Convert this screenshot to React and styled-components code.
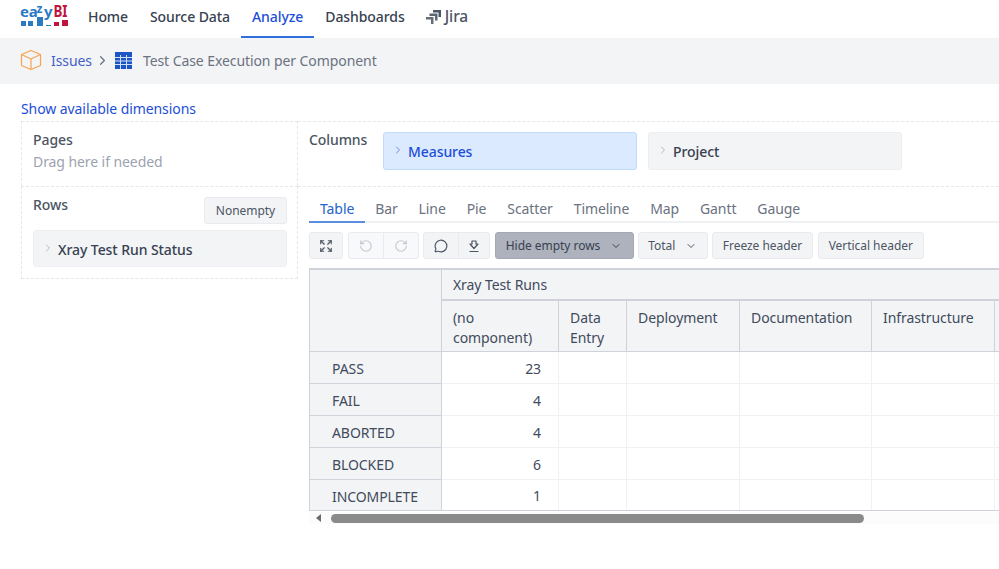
import React from 'react';
import styled, { createGlobalStyle } from 'styled-components';
import { ChevronRight, ChevronDown, Expand, RotateCcw, RotateCw, MessageCircle } from 'lucide-react';

const GlobalStyle = createGlobalStyle`
  html, body {
    margin: 0;
    padding: 0;
    background: #fff;
    overflow: hidden;
  }
  body {
    font-family: "Noto Sans", "Open Sans", sans-serif;
    font-size: 14px;
    letter-spacing: -0.08px;
    color: #374151;
  }
  * { box-sizing: border-box; }
`;

const Page = styled.div`
  width: 999px;
  height: 569px;
  overflow: hidden;
`;

const Nav = styled.nav`
  height: 38px;
  display: flex;
  align-items: stretch;
  padding-left: 20px;
`;

const Logo = styled.svg`
  width: 50px;
  height: 30px;
  margin-right: 7px;
`;

const NavItem = styled.a`
  display: flex;
  align-items: center;
  padding: 0 11px 4px;
  height: 38px;
  font-size: 14px;
  font-weight: 500;
  color: ${p => (p.$active ? '#1d4ed8' : '#374151')};
  border-bottom: 2px solid ${p => (p.$active ? '#2f6fdf' : 'transparent')};
`;

const JiraItem = styled(NavItem)`
  gap: 3px;
  padding-left: 10px;
  font-size: 15.5px;
  color: #4b5563;
`;

const Crumbs = styled.div`
  height: 46px;
  background: #f3f4f6;
  display: flex;
  align-items: center;
  padding: 0 0 2px 20px;
  font-size: 14px;
`;

const CrumbLink = styled.a`
  color: #4460c8;
  margin-left: 9px;
`;

const CrumbChevron = styled(ChevronRight)`
  color: #6b7280;
  margin: 0 5px 0 3px;
`;

const CrumbTitle = styled.span`
  color: #6b7280;
  margin-left: 11px;
`;

const ShowLink = styled.a`
  display: block;
  margin: 15px 0 0 21px;
  height: 22px;
  line-height: 19px;
  font-size: 14px;
  color: #1d4ed8;
`;

const Board = styled.div`
  display: grid;
  grid-template-columns: 277px 701px;
  grid-template-rows: 65px auto;
  margin-left: 21px;
`;

const Zone = styled.section`
  border-top: 1px dashed #e5e7eb;
  border-left: ${p => (p.$right ? 'none' : '1px dashed #e5e7eb')};
  border-right: ${p => (p.$right ? 'none' : '1px dashed #e5e7eb')};
  border-bottom: ${p => (p.$bottom ? '1px dashed #e5e7eb' : 'none')};
`;

const PagesZone = styled(Zone)`
  padding: 8px 11px;
`;

const ZoneTitle = styled.div`
  font-size: 14px;
  font-weight: 500;
  line-height: 20px;
  color: #4b5563;
`;

const Hint = styled.div`
  font-size: 14px;
  line-height: 22px;
  margin-top: 1px;
  color: #9ca3af;
`;

const ColumnsZone = styled(Zone)`
  display: flex;
  padding: 8px 0 0 11px;
`;

const ColumnsTitle = styled(ZoneTitle)`
  width: 74px;
  flex: none;
`;

const Pills = styled.div`
  display: flex;
  gap: 11px;
  margin-top: 2px;
`;

const Pill = styled.div`
  width: 254px;
  height: ${p => p.$height || 38}px;
  display: flex;
  align-items: center;
  padding-left: 8px;
  gap: 4px;
  border-radius: 3px;
  border: 1px solid ${p => (p.$active ? '#bfdbfe' : '#eceef1')};
  background: ${p => (p.$active ? '#dbeafe' : '#f3f4f6')};
  color: ${p => (p.$active ? '#1d4ed8' : '#374151')};
  font-weight: 500;
  font-size: 14px;
  svg { color: ${p => (p.$active ? '#6a8fe0' : '#b3b8c2')}; flex: none; margin-top: -3px; }
`;

const RowPill = styled(Pill)`
  padding-top: 1px;
`;

const RowsZone = styled(Zone)`
  padding: 8px 10px 11px 11px;
  height: 93px;
`;

const RowsHead = styled.div`
  display: flex;
  justify-content: space-between;
  height: 35px;
`;

const Button = styled.button`
  height: 27px;
  width: ${p => p.$width}px;
  padding: 0;
  flex: none;
  display: inline-flex;
  align-items: center;
  justify-content: center;
  gap: 10px;
  font: inherit;
  font-size: 12px;
  letter-spacing: -0.04px;
  color: ${p => (p.$pressed ? '#374151' : '#4b5563')};
  background: ${p => (p.$pressed ? '#adb2bd' : '#f3f4f6')};
  border: 1px solid ${p => (p.$pressed ? '#a3a8b4' : '#e9ebee')};
  border-radius: 3px;
`;

const NonemptyButton = styled(Button)`
  margin-top: 2px;
`;

const ReportZone = styled(Zone)`
  padding-left: 11px;
`;

const Tabs = styled.div`
  display: flex;
  height: 36px;
  padding-top: 11px;
  border-bottom: 2px solid #f0f1f3;
`;

const Tab = styled.div`
  height: 25px;
  padding: 0 11px;
  margin-right: -1.1px;
  font-size: 14px;
  line-height: 21px;
  color: ${p => (p.$active ? '#2563c9' : '#6b7280')};
  border-bottom: 2px solid ${p => (p.$active ? '#5b8de0' : 'transparent')};
`;

const Toolbar = styled.div`
  display: flex;
  gap: 4.500px;
  margin-top: 9px;
  height: 27px;
`;

const Group = styled.div`
  display: flex;
  height: 27px;
  flex: none;
  border: 1px solid #e9ebee;
  border-radius: 3px;
  background: ${p => (p.$off ? '#f8f9fa' : '#f3f4f6')};
`;

const IconCell = styled.div`
  width: ${p => p.$width}px;
  display: flex;
  align-items: center;
  justify-content: center;
  color: ${p => (p.$off ? '#c4c8cf' : '#4b5563')};
  & + & { border-left: 1px solid #e9ebee; }
`;

const TableWrap = styled.div`
  margin-top: 9px;
  width: 690px;
  overflow: hidden;
`;

const Table = styled.table`
  border-collapse: collapse;
  table-layout: fixed;
  width: 760px;
  font-size: 14px;
`;

const Head = styled.th`
  background: #f3f4f6;
  border: 1px solid #cfd2da;
  border-top-width: 2px;
  padding: ${p => (p.$top ? '5px 11px 4px' : '7px 11px 3px')};
  font-weight: 400;
  text-align: left;
  vertical-align: top;
  line-height: 20px;
  color: #414b5c;
`;

const RowHead = styled.th`
  height: 32px;
  background: #f3f4f6;
  border: 1px solid #cfd2da;
  padding: 2px 0 0 22px;
  font-weight: 400;
  text-align: left;
  color: #414b5c;
  tr:last-child & { height: 31px; }
`;

const Cell = styled.td`
  height: 32px;
  border: 1px solid #f0f1f4;
  border-bottom-color: ${p => (p.$last ? '#cfd2da' : '#f0f1f4')};
  padding: 1px 17px 0 0;
  text-align: right;
  color: #414b5c;
  tr:last-child & { height: 31px; }
`;

const Scrollbar = styled.div`
  width: 690px;
  height: 12px;
  margin-top: 1px;
  display: flex;
  align-items: center;
  background: #fcfcfc;
  padding-left: 7px;
`;

const ScrollArrow = styled.div`
  width: 0;
  height: 0;
  border-top: 4px solid transparent;
  border-bottom: 4px solid transparent;
  border-right: 5px solid #6b6b6b;
`;

const ScrollThumb = styled.div`
  width: 533px;
  height: 9px;
  margin-left: 10px;
  border-radius: 5px;
  background: #8a8a8a;
`;

const columns = ['(no component)', 'Data Entry', 'Deployment', 'Documentation', 'Infrastructure', 'Other'];
const widths = [132, 117, 68, 113, 132, 123, 75];
const rows = [['PASS', 23], ['FAIL', 4], ['ABORTED', 4], ['BLOCKED', 6], ['INCOMPLETE', 1]];
const tabs = ['Table', 'Bar', 'Line', 'Pie', 'Scatter', 'Timeline', 'Map', 'Gantt', 'Gauge'];

const EazyLogo = () => (
  <Logo viewBox="0 -2 50 30">
    <text x="0" y="15" fontFamily="Noto Sans" fontWeight="700" fontSize="15" letterSpacing="-0.3" fill="#2b7bc4">ea</text>
    <text x="16.500" y="11" fontFamily="Noto Sans" fontWeight="700" fontSize="12" fill="#2b7bc4">z</text>
    <text x="24" y="15" fontFamily="Noto Sans" fontWeight="700" fontSize="15" fill="#2b7bc4">y</text>
    <text x="33.500" y="15" fontFamily="Noto Sans" fontWeight="700" fontSize="16" textLength="14" lengthAdjust="spacingAndGlyphs" fill="#c0143c">BI</text>
    <rect x="1" y="19" width="5" height="5" fill="#2b7bc4" />
    <rect x="8" y="19" width="5" height="5" fill="#2b7bc4" />
    <rect x="17" y="15" width="6" height="9" fill="#2b7bc4" />
    <rect x="26" y="23" width="5" height="1" fill="#2b7bc4" />
    <rect x="34" y="20" width="5" height="4" fill="#c0143c" />
    <rect x="42" y="18" width="6" height="6" fill="#c0143c" />
  </Logo>
);

const JiraIcon = () => (
  <svg width="16" height="15" viewBox="0 0 16 15" fill="#4b5563">
    <path d="M7 1h8v7h-2.500V3.500H7z" />
    <path d="M3.500 4.500h8v7H9V7H3.500z" opacity=".9" />
    <path d="M0 8h7.500v7H5v-4.500H0z" opacity=".85" />
  </svg>
);

const CubeIcon = () => (
  <svg width="22" height="22" viewBox="0 0 22 22" fill="none" stroke="#f9a350" strokeWidth="1.200" strokeLinejoin="round">
    <path d="M11 1.500l9.500 4v11L11 20.500l-9.500-4v-11z" />
    <path d="M1.500 5.500L11 10l9.500-4.500M11 10v10.500" />
  </svg>
);

const GridIcon = () => (
  <svg width="17" height="17" viewBox="0 0 17 17">
    <rect width="17" height="17" fill="#1d55c4" />
    <path d="M0 5.500h17M0 9h17M0 12.500h17M5.500 3v14M11.500 3v14" stroke="#cfe0f7" strokeWidth="1" />
  </svg>
);

const ExportIcon = () => (
  <svg width="14" height="14" viewBox="0 0 14 14" fill="none" stroke="#4b5563" strokeWidth="1.200">
    <path d="M2.500 12.500h9M5 2h4v3h2L7 9.500 3 5h2z" strokeLinejoin="round" />
  </svg>
);

export default function App() {
  return (
    <Page>
      <GlobalStyle />
      <Nav>
        <EazyLogo />
        <NavItem>Home</NavItem>
        <NavItem>Source Data</NavItem>
        <NavItem $active>Analyze</NavItem>
        <NavItem>Dashboards</NavItem>
        <JiraItem><JiraIcon /> Jira</JiraItem>
      </Nav>
      <Crumbs>
        <CubeIcon />
        <CrumbLink>Issues</CrumbLink>
        <CrumbChevron size={15} />
        <GridIcon />
        <CrumbTitle>Test Case Execution per Component</CrumbTitle>
      </Crumbs>
      <ShowLink>Show available dimensions</ShowLink>
      <Board>
        <PagesZone>
          <ZoneTitle>Pages</ZoneTitle>
          <Hint>Drag here if needed</Hint>
        </PagesZone>
        <ColumnsZone $right>
          <ColumnsTitle>Columns</ColumnsTitle>
          <Pills>
            <Pill $active><ChevronRight size={12} /> Measures</Pill>
            <Pill><ChevronRight size={12} /> Project</Pill>
          </Pills>
        </ColumnsZone>
        <RowsZone $bottom>
          <RowsHead>
            <ZoneTitle>Rows</ZoneTitle>
            <NonemptyButton $width={83}>Nonempty</NonemptyButton>
          </RowsHead>
          <RowPill $height={37}><ChevronRight size={12} /> Xray Test Run Status</RowPill>
        </RowsZone>
        <ReportZone $right>
          <Tabs>
            {tabs.map((t, i) => <Tab key={t} $active={i === 0}>{t}</Tab>)}
          </Tabs>
          <Toolbar>
            <Group><IconCell $width={32}><Expand size={14} /></IconCell></Group>
            <Group $off>
              <IconCell $off $width={34.5}><RotateCcw size={14} /></IconCell>
              <IconCell $off $width={34.5}><RotateCw size={14} /></IconCell>
            </Group>
            <Group>
              <IconCell $width={34}><MessageCircle size={14} /></IconCell>
              <IconCell $width={31}><ExportIcon /></IconCell>
            </Group>
            <Button $pressed $width={139}>Hide empty rows <ChevronDown size={12} /></Button>
            <Button $width={69.5}>Total <ChevronDown size={12} /></Button>
            <Button $width={101}>Freeze header</Button>
            <Button $width={106.5}>Vertical header</Button>
          </Toolbar>
          <TableWrap>
            <Table>
              <colgroup>
                {widths.map((w, i) => <col key={i} style={{ width: w }} />)}
              </colgroup>
              <thead>
                <tr>
                  <Head rowSpan={2} />
                  <Head $top colSpan={6}>Xray Test Runs</Head>
                </tr>
                <tr>
                  {columns.map(c => <Head key={c}>{c === 'Other' ? '' : c}</Head>)}
                </tr>
              </thead>
              <tbody>
                {rows.map(([name, value], r) => (
                  <tr key={name}>
                    <RowHead>{name}</RowHead>
                    {columns.map((c, i) => (
                      <Cell key={c} $last={r === rows.length - 1}>{i === 0 ? value : ''}</Cell>
                    ))}
                  </tr>
                ))}
              </tbody>
            </Table>
          </TableWrap>
          <Scrollbar>
            <ScrollArrow />
            <ScrollThumb />
          </Scrollbar>
        </ReportZone>
      </Board>
    </Page>
  );
}
